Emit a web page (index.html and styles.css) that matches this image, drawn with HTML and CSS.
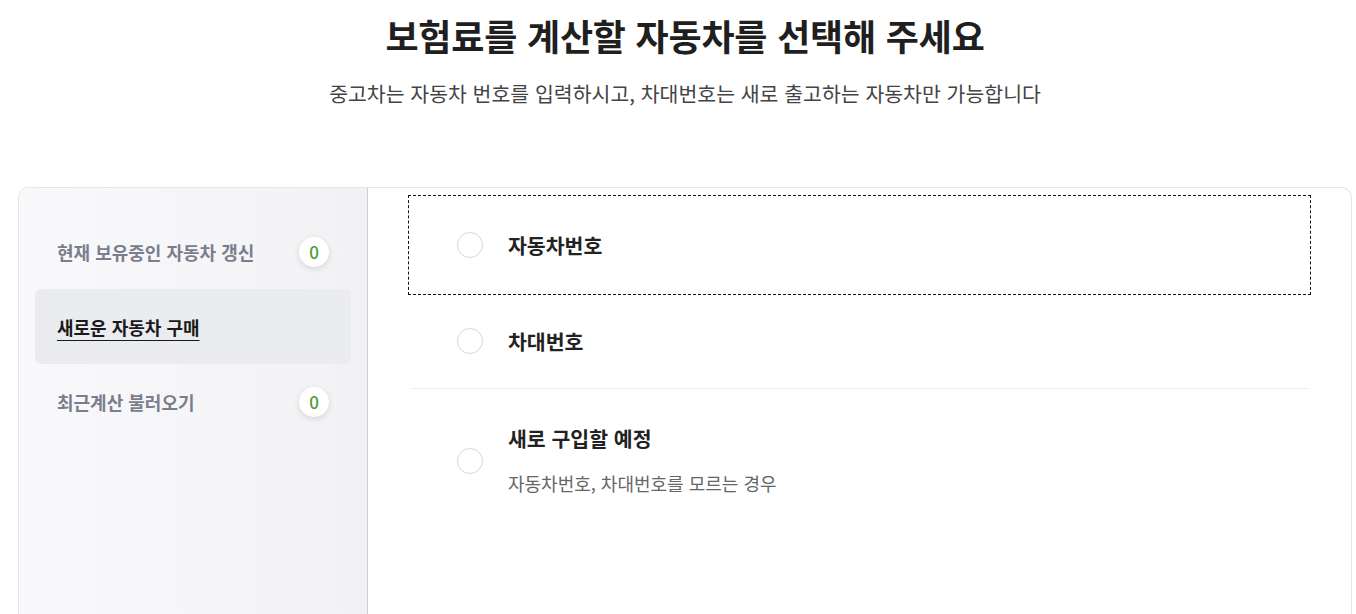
FILE: index.html
```html
<!DOCTYPE html>
<html lang="ko">
<head>
    <meta charset="UTF-8">
    <meta name="viewport" content="width=device-width, initial-scale=1.0">
    <title>자동차 선택</title>
    <link rel="stylesheet" href="styles.css">
</head>
<body>
<div class="wrap">
    <div class="page-head">
        <h1>보험료를 계산할 자동차를 선택해 주세요</h1>
        <p class="sub">중고차는 자동차 번호를 입력하시고, 차대번호는 새로 출고하는 자동차만 가능합니다</p>
    </div>

    <div class="card">
        <div class="side">
            <div class="side-item">
                <span>현재 보유중인 자동차 갱신</span>
                <span class="count">0</span>
            </div>
            <div class="side-item active">
                <span>새로운 자동차 구매</span>
            </div>
            <div class="side-item">
                <span>최근계산 불러오기</span>
                <span class="count">0</span>
            </div>
        </div>

        <div class="options">
            <div class="group">
                <label class="option focus">
                    <span class="radio"></span>
                    <span class="opt-title">자동차번호</span>
                </label>
                <label class="option second">
                    <span class="radio"></span>
                    <span class="opt-title">차대번호</span>
                </label>
            </div>
            <label class="option tall">
                <span class="radio"></span>
                <span class="opt-text">
                    <span class="opt-title">새로 구입할 예정</span>
                    <span class="opt-desc">자동차번호, 차대번호를 모르는 경우</span>
                </span>
            </label>
        </div>
    </div>
</div>
</body>
</html>
```

FILE: styles.css
```css
body {
    margin: 0;
    font-family: "Noto Sans CJK KR", "Noto Sans", sans-serif;
    background-color: #ffffff;
    color: #222;
}
.wrap {
    margin: 0 4px 0 18px;
}
.page-head {
    text-align: center;
    padding-top: 9px;
    height: 178px;
}
h1 {
    margin: 0;
    font-size: 36px;
    line-height: 52px;
    font-weight: 700;
    letter-spacing: -0.2px;
    color: #1f1f1f;
}
.sub {
    margin: 19px 0 0;
    font-size: 20.5px;
    line-height: 26px;
    color: #444;
}
.card {
    display: flex;
    height: 440px;
    border: 1px solid #e6e6e8;
    border-bottom: none;
    border-radius: 10px 10px 0 0;
    overflow: hidden;
}
.side {
    width: 316px;
    padding: 26px 16px 0;
    background: linear-gradient(to right, #f9f9fb, #f2f2f5);
    border-right: 1px solid #cfcfd3;
}
.side-item {
    display: flex;
    align-items: center;
    justify-content: space-between;
    height: 75px;
    padding: 0 22px;
    border-radius: 6px;
    font-size: 18px;
    font-weight: 700;
    color: #7a7e8c;
}
.side-item.active {
    background-color: #ebecf0;
    color: #1a1a1a;
}
.side-item.active span {
    text-decoration: underline;
    text-underline-offset: 5px;
    text-decoration-thickness: 1px;
}
.count {
    width: 30px;
    height: 30px;
    border-radius: 50%;
    background: #fff;
    box-shadow: 0 2px 6px rgba(0,0,0,0.12);
    display: flex;
    align-items: center;
    justify-content: center;
    font-size: 17px;
    font-weight: 500;
    color: #4f9a3a;
}
.options {
    flex: 1;
    padding: 10px 43px 0;
}
.group {
    border-bottom: 1px solid #ececee;
}
.option {
    display: flex;
    align-items: center;
    height: 94px;
    padding-left: 46px;
    cursor: pointer;
}
.option.focus {
    outline: 1px dashed #111;
    outline-offset: 2px;
}
.option.second {
    margin-top: 2px;
}
.option.tall {
    height: 144px;
}
.radio {
    width: 24px;
    height: 24px;
    border: 1px solid #d6d6da;
    border-radius: 50%;
    background: #fff;
    margin-right: 25px;
    flex-shrink: 0;
}
.opt-title {
    font-size: 20.5px;
    line-height: 28px;
    font-weight: 700;
    color: #222;
}
.opt-text {
    display: flex;
    flex-direction: column;
    margin-top: -4px;
}
.opt-desc {
    margin-top: 19px;
    font-size: 18px;
    line-height: 24px;
    color: #666;
}
```
